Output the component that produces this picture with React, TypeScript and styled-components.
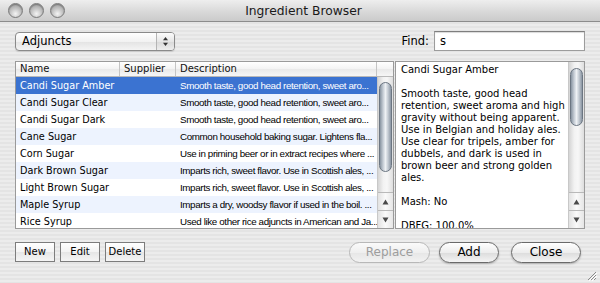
import React from 'react'
import styled, { createGlobalStyle } from 'styled-components'

const GlobalStyle = createGlobalStyle`
  html, body {
    margin: 0;
    padding: 0;
    background: #e8e8e8;
  }
`

const rows = [
  { name: 'Candi Sugar Amber', desc: 'Smooth taste, good head retention, sweet aro...' },
  { name: 'Candi Sugar Clear', desc: 'Smooth taste, good head retention, sweet aro...' },
  { name: 'Candi Sugar Dark', desc: 'Smooth taste, good head retention, sweet aro...' },
  { name: 'Cane Sugar', desc: 'Common household baking sugar. Lightens fla...' },
  { name: 'Corn Sugar', desc: 'Use in priming beer or in extract recipes where ...' },
  { name: 'Dark Brown Sugar', desc: 'Imparts rich, sweet flavor. Use in Scottish ales, ...' },
  { name: 'Light Brown Sugar', desc: 'Imparts rich, sweet flavor. Use in Scottish ales, ...' },
  { name: 'Maple Syrup', desc: 'Imparts a dry, woodsy flavor if used in the boil. ...' },
  { name: 'Rice Syrup', desc: 'Used like other rice adjuncts in American and Ja...' },
]

const detailLines = [
  'Candi Sugar Amber',
  '',
  'Smooth taste, good head',
  'retention, sweet aroma and high',
  'gravity without being apparent.',
  'Use in Belgian and holiday ales.',
  'Use clear for tripels, amber for',
  'dubbels, and dark is used in',
  'brown beer and strong golden',
  'ales.',
  '',
  'Mash: No',
  '',
  'DBFG: 100.0%',
]

const Window = styled.div`
  position: relative;
  width: 600px;
  height: 283px;
  overflow: hidden;
  font-family: "DejaVu Sans", "Liberation Sans", sans-serif;
  color: #000;
  background: repeating-linear-gradient(
    to bottom,
    #ececec 0px,
    #ececec 2px,
    #e4e4e4 2px,
    #e4e4e4 4px
  );
`

const TitleBar = styled.div`
  height: 21px;
  border-bottom: 1px solid #8c8c8c;
  background: linear-gradient(to bottom, #eeeeee, #d9d9d9 55%, #cbcbcb);
  display: flex;
  align-items: center;
`

const Lights = styled.div`
  display: flex;
  gap: 6px;
  padding-left: 8px;
`

const Light = styled.div`
  width: 15px;
  height: 15px;
  box-sizing: border-box;
  border-radius: 50%;
  border: 1px solid #7a7a7a;
  background: radial-gradient(circle at 50% 75%, #f4f4f4 0%, #c4c4c4 45%, #8e8e8e 100%);
  box-shadow: inset 0 1px 1px rgba(0, 0, 0, 0.25);
`

const Title = styled.div`
  flex: 1;
  text-align: center;
  font-size: 12.3px;
  color: #1a1a1a;
  margin-right: 58px;
  margin-top: 1px;
`

const Body = styled.div`
  padding: 9px 15px 0 15px;
  display: flex;
  flex-direction: column;
`

const TopRow = styled.div`
  height: 20px;
  display: flex;
  align-items: center;
  justify-content: space-between;
`

const Popup = styled.div`
  width: 160px;
  height: 19px;
  box-sizing: border-box;
  border: 1px solid #8a8a8a;
  border-radius: 4px;
  background: linear-gradient(to bottom, #ffffff, #f2f2f2 50%, #e3e3e3 51%, #f4f4f4);
  display: flex;
  align-items: stretch;
  box-shadow: 0 1px 1px rgba(0, 0, 0, 0.12);
`

const PopupLabel = styled.div`
  flex: 1;
  font-size: 11.5px;
  line-height: 17px;
  padding-left: 6px;
`

const PopupArrows = styled.div`
  width: 17px;
  border-left: 1px solid #b4b4b4;
  display: flex;
  align-items: center;
  justify-content: center;
  background: linear-gradient(to bottom, #fbfbfb, #e6e6e6 50%, #d8d8d8 51%, #eeeeee);
  border-radius: 0 3px 3px 0;
`

const FindGroup = styled.div`
  display: flex;
  align-items: center;
  gap: 5px;
`

const FindLabel = styled.span`
  font-size: 11.5px;
`

const FindField = styled.div`
  width: 151px;
  height: 20px;
  box-sizing: border-box;
  border: 1px solid #9c9c9c;
  border-top-color: #7e7e7e;
  background: #fff;
  box-shadow: inset 0 1px 1px rgba(0, 0, 0, 0.15);
  font-size: 11.5px;
  line-height: 18px;
  padding-left: 5px;
`

const MainRow = styled.div`
  margin-top: 10px;
  height: 168px;
  display: flex;
`

const TableBox = styled.div`
  width: 379px;
  box-sizing: border-box;
  border: 1px solid #9a9a9a;
  background: #fff;
  display: flex;
  flex-direction: column;
  overflow: hidden;
`

const Header = styled.div`
  height: 14px;
  display: grid;
  grid-template-columns: 104px 56px 1fr 16px;
  border-bottom: 1px solid #b9b9b9;
  background: linear-gradient(to bottom, #ffffff, #f3f3f3 50%, #e9e9e9 51%, #f6f6f6);
`

const HeadCell = styled.div<{ $last?: boolean }>`
  font-size: 10px;
  line-height: 14px;
  padding-left: 4px;
  border-right: ${p => (p.$last ? 'none' : '1px solid #c4c4c4')};
  color: #111;
`

const TableArea = styled.div`
  flex: 1;
  display: flex;
  min-height: 0;
`

const RowList = styled.div`
  flex: 1;
  overflow: hidden;
`

const Row = styled.div<{ $selected?: boolean; $alt?: boolean }>`
  height: 17px;
  display: grid;
  grid-template-columns: 104px 56px 1fr;
  align-items: center;
  background: ${p => (p.$selected ? '#3b73d1' : p.$alt ? '#edf3fe' : '#ffffff')};
  color: ${p => (p.$selected ? '#ffffff' : '#000000')};
`

const NameCell = styled.div`
  font-size: 9.7px;
  padding-left: 4px;
  white-space: nowrap;
  overflow: hidden;
`

const DescCell = styled.div`
  font-family: "Liberation Sans", Arial, sans-serif;
  font-size: 9.8px;
  letter-spacing: -0.38px;
  padding-left: 4px;
  white-space: nowrap;
  overflow: hidden;
`

const ScrollTrack = styled.div`
  width: 16px;
  box-sizing: border-box;
  border-left: 1px solid #c8c8c8;
  display: flex;
  flex-direction: column;
  background: linear-gradient(to right, #d4d4d4, #f2f2f2 35%, #f7f7f7 60%, #dedede);
`

const Thumb = styled.div<{ $top: number; $height: number }>`
  margin: ${p => p.$top}px 1px 0 1px;
  height: ${p => p.$height}px;
  box-sizing: border-box;
  border: 1px solid #6c7682;
  border-radius: 7px;
  background: linear-gradient(
    to right,
    #8894a1,
    #c9d0d8 30%,
    #eef1f4 50%,
    #c5ccd4 72%,
    #8a95a2
  );
`

const TrackGap = styled.div`
  flex: 1;
`

const ArrowBtn = styled.div`
  height: 17px;
  border-top: 1px solid #b9b9b9;
  display: flex;
  align-items: center;
  justify-content: center;
  background: linear-gradient(to right, #e2e2e2, #fafafa 50%, #e6e6e6);
`

const DetailBox = styled.div`
  width: 190px;
  margin-left: 1px;
  box-sizing: border-box;
  border: 1px solid #9a9a9a;
  background: #fff;
  display: flex;
  overflow: hidden;
`

const DetailText = styled.div`
  flex: 1;
  padding: 2px 0 0 5px;
  font-size: 10px;
  line-height: 12px;
  white-space: nowrap;
  overflow: hidden;
`

const BottomRow = styled.div`
  margin-top: 12px;
  height: 22px;
  display: flex;
  align-items: center;
`

const SmallButtons = styled.div`
  display: flex;
  gap: 5px;
`

const SmallButton = styled.div`
  width: 40px;
  height: 20px;
  box-sizing: border-box;
  border: 1px solid #7c7c7c;
  background: linear-gradient(to bottom, #ffffff, #f3f3f3 50%, #e6e6e6 51%, #f5f5f5);
  font-size: 10px;
  line-height: 18px;
  text-align: center;
`

const Spacer = styled.div`
  flex: 1;
`

const AquaButtons = styled.div`
  display: flex;
  align-items: center;
  margin-right: 4px;
`

const AquaButton = styled.div<{ $width: number; $disabled?: boolean; $gap?: number }>`
  width: ${p => p.$width}px;
  height: 21px;
  margin-left: ${p => p.$gap ?? 0}px;
  box-sizing: border-box;
  border-radius: 11px;
  border: 1px solid ${p => (p.$disabled ? '#b8b8b8' : '#6a6a6a')};
  background: ${p =>
    p.$disabled
      ? 'linear-gradient(to bottom, #fafafa, #efefef 50%, #e6e6e6 51%, #f2f2f2)'
      : 'linear-gradient(to bottom, #ffffff, #ededed 50%, #dcdcdc 51%, #f4f4f4)'};
  box-shadow: ${p => (p.$disabled ? 'none' : '0 1px 2px rgba(0, 0, 0, 0.25)')};
  color: ${p => (p.$disabled ? '#9d9d9d' : '#000')};
  font-size: 12px;
  line-height: 19px;
  text-align: center;
`

const Grip = styled.svg`
  position: absolute;
  right: 3px;
  bottom: 2px;
`

const UpArrow = () => (
  <svg width="7" height="6" viewBox="0 0 7 6">
    <path d="M3.5 0.5 L6.5 5.5 L0.5 5.5 Z" fill="#4a4a4a" />
  </svg>
)

const DownArrow = () => (
  <svg width="7" height="6" viewBox="0 0 7 6">
    <path d="M0.5 0.5 L6.5 0.5 L3.5 5.5 Z" fill="#4a4a4a" />
  </svg>
)

const Scroller = ({ top, height }: { top: number; height: number }) => (
  <ScrollTrack>
    <Thumb $top={top} $height={height} />
    <TrackGap />
    <ArrowBtn>
      <UpArrow />
    </ArrowBtn>
    <ArrowBtn>
      <DownArrow />
    </ArrowBtn>
  </ScrollTrack>
)

const App = () => {
  return (
    <>
      <GlobalStyle />
      <Window>
        <TitleBar>
          <Lights>
            <Light />
            <Light />
            <Light />
          </Lights>
          <Title>Ingredient Browser</Title>
        </TitleBar>
        <Body>
          <TopRow>
            <Popup>
              <PopupLabel>Adjuncts</PopupLabel>
              <PopupArrows>
                <svg width="7" height="11" viewBox="0 0 7 11">
                  <path d="M3.5 1 L6 4.3 L1 4.3 Z" fill="#333" />
                  <path d="M1 6.7 L6 6.7 L3.5 10 Z" fill="#333" />
                </svg>
              </PopupArrows>
            </Popup>
            <FindGroup>
              <FindLabel>Find:</FindLabel>
              <FindField>s</FindField>
            </FindGroup>
          </TopRow>
          <MainRow>
            <TableBox>
              <Header>
                <HeadCell>Name</HeadCell>
                <HeadCell>Supplier</HeadCell>
                <HeadCell>Description</HeadCell>
                <HeadCell $last />
              </Header>
              <TableArea>
                <RowList>
                  {rows.map((r, i) => (
                    <Row key={i} $selected={i === 0} $alt={i % 2 === 1}>
                      <NameCell>{r.name}</NameCell>
                      <NameCell />
                      <DescCell>{r.desc}</DescCell>
                    </Row>
                  ))}
                </RowList>
                <Scroller top={5} height={90} />
              </TableArea>
            </TableBox>
            <DetailBox>
              <DetailText>
                {detailLines.map((l, i) => (
                  <div key={i}>{l || '\u00a0'}</div>
                ))}
              </DetailText>
              <Scroller top={6} height={58} />
            </DetailBox>
          </MainRow>
          <BottomRow>
            <SmallButtons>
              <SmallButton>New</SmallButton>
              <SmallButton>Edit</SmallButton>
              <SmallButton>Delete</SmallButton>
            </SmallButtons>
            <Spacer />
            <AquaButtons>
              <AquaButton $width={81} $disabled>
                Replace
              </AquaButton>
              <AquaButton $width={60} $gap={9}>
                Add
              </AquaButton>
              <AquaButton $width={70} $gap={12}>
                Close
              </AquaButton>
            </AquaButtons>
          </BottomRow>
        </Body>
        <Grip width="12" height="12" viewBox="0 0 12 12">
          <path d="M11 3 L3 11 M11 6 L6 11 M11 9 L9 11" stroke="#8a8a8a" strokeWidth="1" />
          <path d="M12 4 L4 12 M12 7 L7 12" stroke="#ffffff" strokeWidth="1" />
        </Grip>
      </Window>
    </>
  )
}

export default App
